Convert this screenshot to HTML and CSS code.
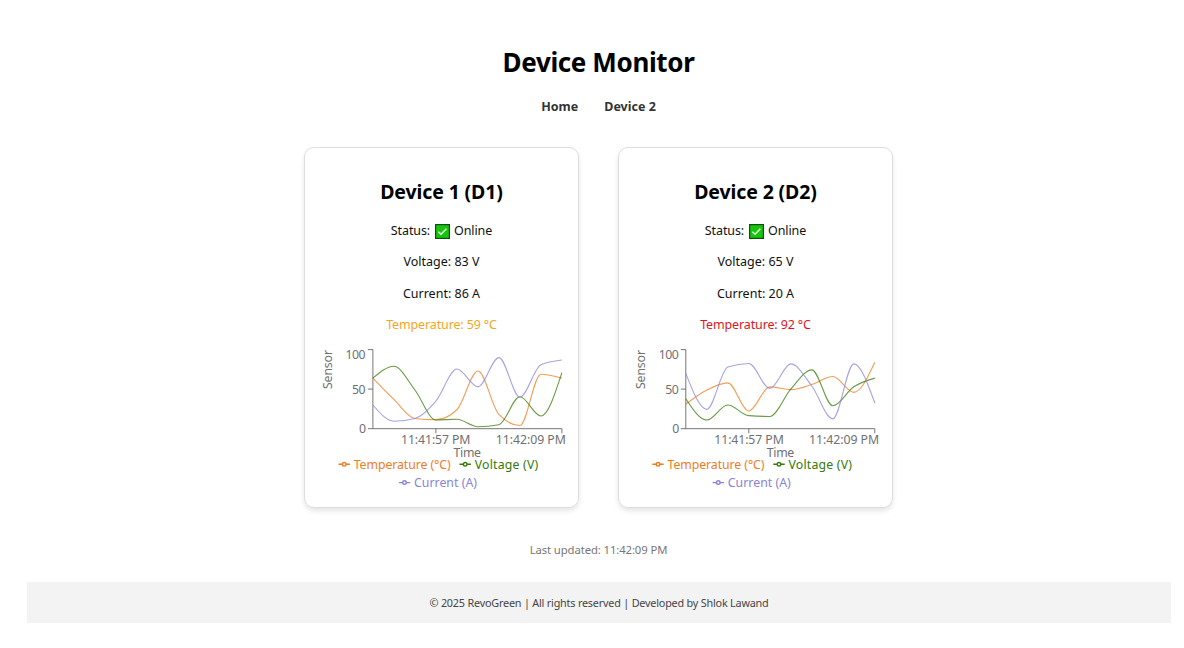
FILE: index.html
```html
<!DOCTYPE html>
<html lang="en">
<head>
<meta charset="utf-8">
<title>Device Monitor</title>
<link rel="stylesheet" href="styles.css">
</head>
<body>
<main class="app">
  <h1 class="title"><span>Device Monitor</span></h1>
  <nav class="nav"><a class="home">Home</a><a class="dev">Device 2</a></nav>
  <section class="cards">
    <article class="card">
      <h2 class="name">Device 1 (D1)</h2>
      <p class="row status">Status: <svg class="check" viewBox="0 0 15 15"><rect x=".6" y=".6" width="13.8" height="13.8" fill="#16c60c" stroke="#164a14" stroke-width="1.2"/><path d="M3.4 7.8 6 10.3 11.4 4.7" fill="none" stroke="#e8ffe8" stroke-width="1.5"/></svg> Online</p>
      <p class="row">Voltage: 83 V</p>
      <p class="row">Current: 86 A</p>
      <p class="row warm">Temperature: 59 °C</p>
      <svg class="chart" data-device="0" viewBox="0 0 274 160"></svg>
    </article>
    <article class="card">
      <h2 class="name">Device 2 (D2)</h2>
      <p class="row status">Status: <svg class="check" viewBox="0 0 15 15"><rect x=".6" y=".6" width="13.8" height="13.8" fill="#16c60c" stroke="#164a14" stroke-width="1.2"/><path d="M3.4 7.8 6 10.3 11.4 4.7" fill="none" stroke="#e8ffe8" stroke-width="1.5"/></svg> Online</p>
      <p class="row">Voltage: 65 V</p>
      <p class="row">Current: 20 A</p>
      <p class="row hot">Temperature: 92 °C</p>
      <svg class="chart" data-device="1" viewBox="0 0 274 160"></svg>
    </article>
  </section>
  <p class="updated">Last updated: 11:42:09 PM</p>
  <footer class="footer">© 2025 RevoGreen | All rights reserved | Developed by Shlok Lawand</footer>
</main>
<script src="chart.js"></script>
</body>
</html>
```
FILE: styles.css
```css
* { box-sizing: border-box; }
body {
  margin: 0;
  background: #fff;
  color: #000;
  font-family: "Noto Sans", "Open Sans", sans-serif;
}
.app {
  display: flex;
  flex-direction: column;
  align-items: center;
  margin: 0 13px 0 26px;
  padding-top: 43px;
}
.title {
  margin: 0;
  font-size: 26px;
  line-height: 38px;
  font-weight: 700;
  letter-spacing: -0.37px;
}
.nav {
  display: flex;
  gap: 26px;
  margin-top: 16px;
  font-size: 12.5px;
  line-height: 20px;
  font-weight: 700;
  color: #333;
}
.cards {
  display: flex;
  gap: 39px;
  margin-top: 30px;
}
.card {
  display: flex;
  flex-direction: column;
  align-items: center;
  width: 275px;
  height: 361px;
  padding-top: 30px;
  border: 1px solid #ddd;
  border-radius: 10px;
  box-shadow: 0 3px 5px rgba(0, 0, 0, 0.1);
}
.name {
  margin: 0 0 15px;
  font-size: 19.5px;
  line-height: 28px;
  font-weight: 700;
  letter-spacing: -0.12px;
}
.row {
  margin: 0 0 11.3px;
  font-size: 12.5px;
  line-height: 20px;
  white-space: nowrap;
  color: #111;
}
.row.warm { color: #f5a623; letter-spacing: -0.13px; }
.row.hot { color: #e3141c; letter-spacing: -0.13px; }
.status {
  display: flex;
  align-items: center;
  gap: 4.5px;
  letter-spacing: -0.1px;
}
.check { width: 15px; height: 15px; }
.chart {
  width: 274px;
  height: 160px;
  margin-top: -6px;
  flex: none;
}
.label { font-size: 12.3px; fill: #707070; }
.axis { stroke: #666; stroke-width: 0.9; fill: none; }
.series { fill: none; stroke-width: 1.1; opacity: 0.75; }
.updated {
  margin: 33px 0 0;
  font-size: 11.3px;
  line-height: 18px;
  letter-spacing: -0.1px;
  color: #777;
}
.footer {
  align-self: stretch;
  height: 41px;
  margin: 23px 0 0 1px;
  background: #f3f3f3;
  color: #444;
  font-size: 10.8px;
  line-height: 41px;
  letter-spacing: -0.19px;
  text-align: center;
}
```
FILE: chart.js
```js
const ORANGE = '#f07c1e', GREEN = '#387908', PURPLE = '#8884d8';
const STEP = 21, BASE = 88.7, SCALE = 0.79;

// Plot origin and label nudge for each card, then sensor readings.
const devices = [
  { x: 67.9, dx: 0, lx: 0.5,
    temp: [64, 37, 13, 11.5, 24, 73, 18, 4, 69, 64],
    volt: [64, 79, 49, 11, 12, 2.5, 5, 40.5, 16, 71],
    curr: [30, 9.5, 13, 35, 75.5, 53, 90, 40, 81, 87] },
  { x: 66.8, dx: -0.7, lx: 0.3,
    temp: [31, 49, 58, 22.5, 53, 49.5, 56, 66, 46, 84],
    volt: [38, 11, 30, 16.5, 15.5, 50, 74.5, 29, 53, 64],
    curr: [70, 24.5, 78, 82.5, 51, 82, 54, 12.5, 82, 32.5] },
];

// Monotone cubic interpolation through evenly spaced points.
function curve(values, x0) {
  const p = values.map((v, i) => [x0 + i * STEP, BASE - v * SCALE]);
  const s = p.slice(1).map((q, i) => (q[1] - p[i][1]) / STEP);
  const t = p.map((_, i) => {
    if (i === 0 || i === p.length - 1) return null;
    const a = s[i - 1], b = s[i];
    return (Math.sign(a) + Math.sign(b)) * Math.min(Math.abs(a), Math.abs(b), Math.abs(a + b) / 4) || 0;
  });
  t[0] = (3 * s[0] - t[1]) / 2;
  t[p.length - 1] = (3 * s[s.length - 1] - t[p.length - 2]) / 2;
  let d = `M${p[0]}`;
  for (let i = 1; i < p.length; i++) {
    const h = STEP / 3;
    d += `C${p[i - 1][0] + h},${p[i - 1][1] + h * t[i - 1]} ${p[i][0] - h},${p[i][1] - h * t[i]} ${p[i]}`;
  }
  return d;
}

function text(x, y, width, content, extra = '') {
  return `<text class="label" x="${x}" y="${y}" textLength="${width}" ${extra}>${content}</text>`;
}

function key(x, y, width, content, color) {
  return `<g fill="none" stroke="${color}" stroke-width="1.4"><path d="M${x} ${y}h3.7m4 0h3.7"/><circle cx="${x + 5.7}" cy="${y}" r="1.8"/></g>` +
    text(x + 15.2, y + 4.3, width, content, `style="fill:${color}"`);
}

document.querySelectorAll('.chart').forEach(svg => {
  const d = devices[svg.dataset.device];
  const x = d.x, end = x + 9 * STEP, n = d.dx;
  svg.innerHTML = `
    <path class="axis" d="M${x - 5} 9.6H${x}V88.7M${x - 5} 49.1H${x}M${x - 5} 88.7H${end}M${x + 63} 88.7v4.6M${end} 88.7v4.6"/>
    <path class="series" stroke="${ORANGE}" d="${curve(d.temp, x)}"/>
    <path class="series" stroke="${GREEN}" d="${curve(d.volt, x)}"/>
    <path class="series" stroke="${PURPLE}" d="${curve(d.curr, x)}"/>
    ${text(40.5 + n, 19.3, 20, '100')}
    ${text(47 + n, 53.7, 13.5, '50')}
    ${text(54 + n, 93.2, 6.5, '0')}
    ${text(96 + n, 104.3, 69.5, '11:41:57 PM')}
    ${text(190.8 + n, 104.3, 70, '11:42:09 PM')}
    ${text(148.5 + n, 117.3, 27.5, 'Time')}
    <g transform="translate(${27 + n} 49) rotate(-90)">${text(0, 0, 39, 'Sensor')}</g>
    ${key(33 + d.lx, 124.3, 97, 'Temperature (°C)', ORANGE)}
    ${key(154 + d.lx, 124.3, 63.5, 'Voltage (V)', GREEN)}
    ${key(93.3 + d.lx, 142.6, 63, 'Current (A)', PURPLE)}`;
});
```
